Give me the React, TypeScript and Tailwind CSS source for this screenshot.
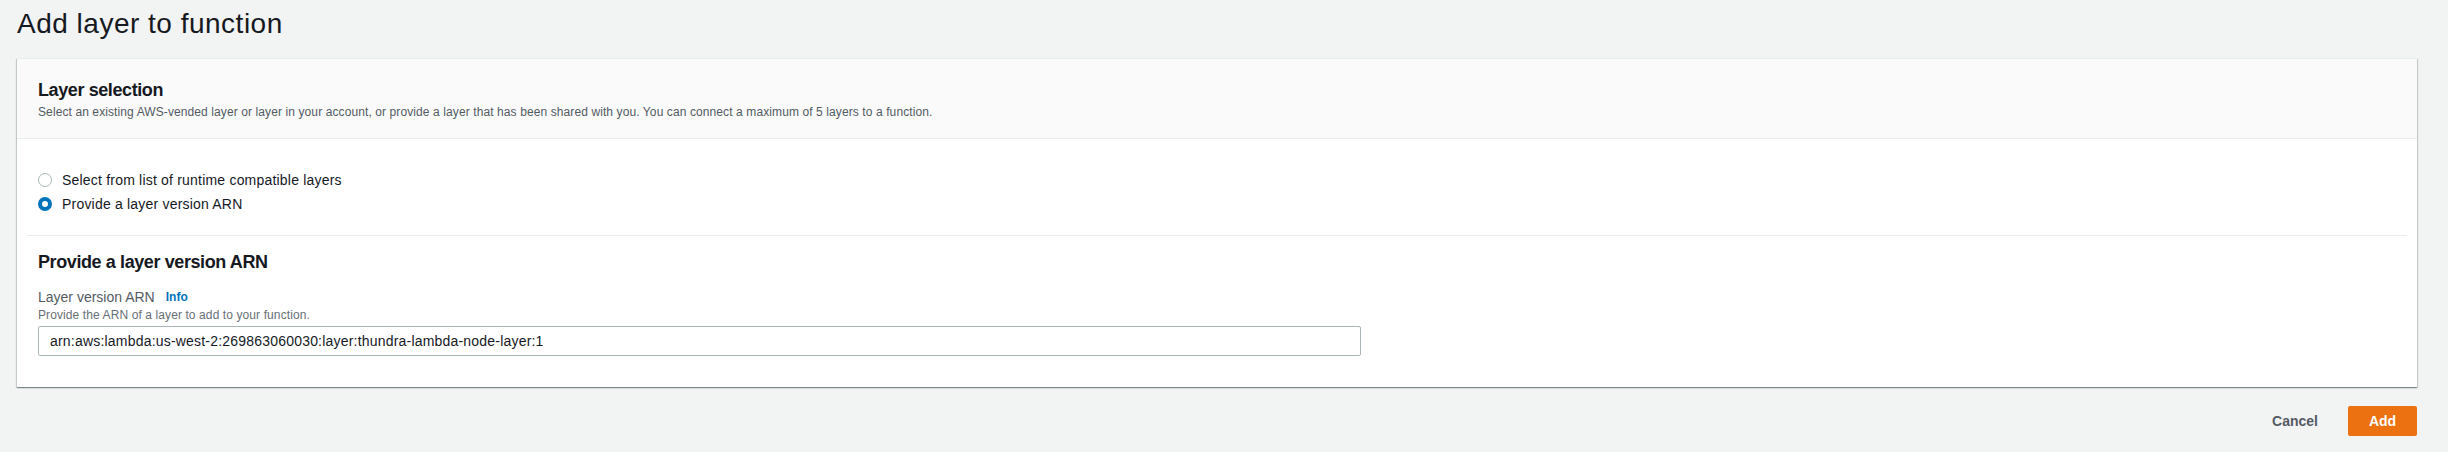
import React from 'react';

const font = { fontFamily: '"Liberation Sans", Arial, sans-serif' };

function Radio({ checked, label }: { checked?: boolean; label: string }) {
  return (
    <label className="flex h-[24px] items-center gap-[10px] text-[14px] tracking-[0.2px] text-[#16191f]">
      {checked ? (
        <span className="h-[14px] w-[14px] rounded-full border-[4px] border-[#0073bb] bg-white" />
      ) : (
        <span className="h-[14px] w-[14px] rounded-full border border-[#aab7b8] bg-white" />
      )}
      <span>{label}</span>
    </label>
  );
}

export default function App() {
  return (
    <div className="h-[452px] w-full bg-[#f2f3f3] pl-[17px] pr-[31px]" style={font}>
      {/* Page title */}
      <h1 className="pt-[6px] text-[28px] leading-[36px] tracking-[0.5px] font-normal text-[#16191f]">
        Add layer to function
      </h1>

      {/* Card */}
      <div className="mt-[16px] border-t border-[#eaeded] bg-white shadow-[0_1px_1px_0_rgba(0,28,36,0.3),1px_1px_1px_0_rgba(0,28,36,0.15),-1px_1px_1px_0_rgba(0,28,36,0.15)]">
        <div className="border-b border-[#eaeded] bg-[#fafafa] pb-[18px] pl-[21px] pr-5 pt-[20px]">
          <h2 className="text-[18px] leading-[22px] font-bold tracking-[-0.4px] text-[#16191f]">Layer selection</h2>
          <p className="mt-[3px] text-[12px] leading-[16px] tracking-[0.1px] text-[#545b64]">
            Select an existing AWS-vended layer or layer in your account, or provide a layer that has been shared with you. You can connect a maximum of 5 layers to a function.
          </p>
        </div>

        <div className="pb-[31px] pt-[29px]">
          <div className="flex flex-col px-[21px]">
            <Radio label="Select from list of runtime compatible layers" />
            <Radio checked label="Provide a layer version ARN" />
          </div>

          <div className="mx-[10px] mt-[19px] border-t border-[#eaeded]" />

          <div className="px-[21px] pt-[15px]">
            <h3 className="text-[18px] leading-[22px] font-bold tracking-[-0.4px] text-[#16191f]">
              Provide a layer version ARN
            </h3>
            <div className="mt-[14px] flex items-center gap-[11px] text-[14px] leading-[20px] text-[#545b64]">
              <span>Layer version ARN</span>
              <span className="text-[12px] font-bold text-[#0073bb]">Info</span>
            </div>
            <p className="text-[12px] leading-[16px] tracking-[0.1px] text-[#687078]">
              Provide the ARN of a layer to add to your function.
            </p>
            <input
              readOnly
              value="arn:aws:lambda:us-west-2:269863060030:layer:thundra-lambda-node-layer:1"
              className="mt-[3px] h-[30px] w-[1323px] rounded-[2px] border border-[#aab7b8] bg-white px-[11px] text-[14px] tracking-[0.2px] text-[#16191f] outline-none"
              style={font}
            />
          </div>
        </div>
      </div>

      {/* Actions */}
      <div className="mt-[19px] flex items-center justify-end gap-[14px]">
        <button className="h-[30px] px-4 text-[14px] font-bold text-[#545b64]">Cancel</button>
        <button className="h-[30px] w-[69px] rounded-[2px] bg-[#ec7211] text-[14px] font-bold text-white">Add</button>
      </div>
    </div>
  );
}
